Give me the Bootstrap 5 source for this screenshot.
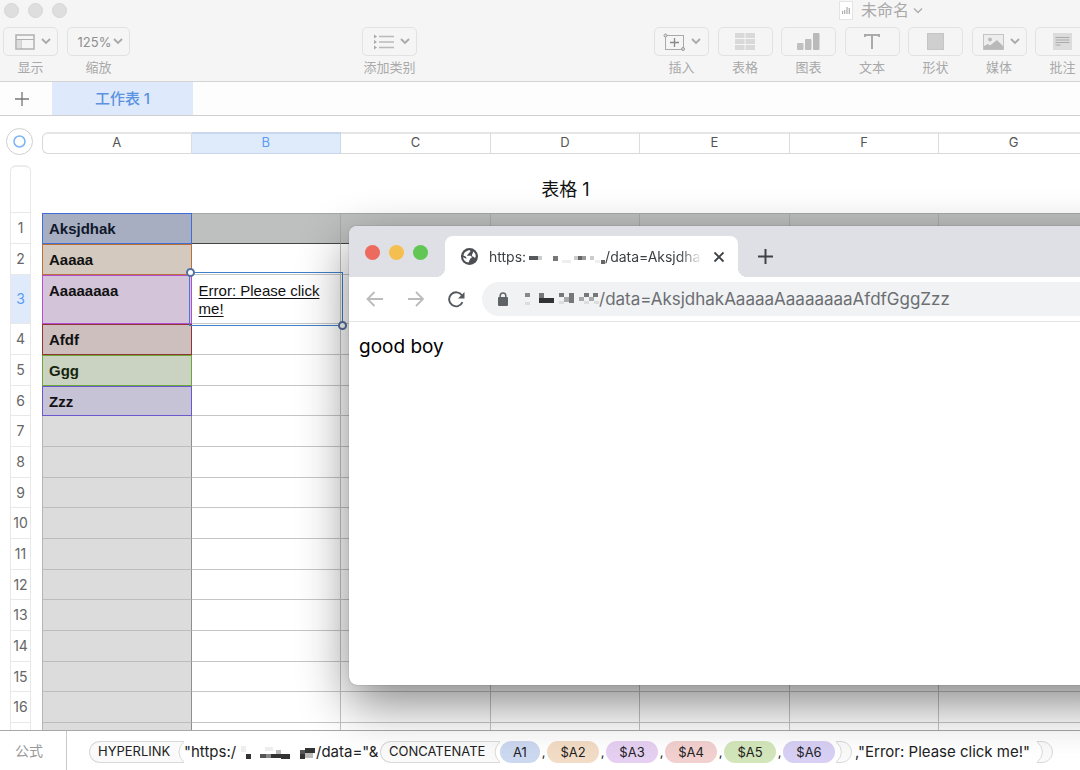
<!DOCTYPE html>
<html lang="zh-CN">
<head>
<meta charset="utf-8">
<meta name="viewport" content="width=device-width, initial-scale=1">
<title>未命名</title>
<link rel="stylesheet" href="https://cdn.jsdelivr.net/npm/bootstrap@5.3.0/dist/css/bootstrap.min.css">
<style>
  body { font-family: Inter, "Noto Sans CJK SC", sans-serif; font-size: 13px; line-height: 18px; color: #222; background: #fff; }
  button { font: inherit; color: inherit; padding: 0; border: 0; background: none; }
  svg { display: block; flex: none; }
  .app { height: 100vh; }
  /* title bar and toolbar */
  .topbar { background: #f5f5f5; border-bottom: 1px solid #d4d4d4; color: #a9a9a9; height: 82px; }
  .titlebar { height: 20px; padding: 0 157px 0 4px; }
  .dots { gap: 9px; }
  .dot { width: 15px; height: 15px; border-radius: 50%; background: #dedede; border: 1px solid #d6d6d6; }
  .doc-title { font-size: 16px; line-height: 20px; }
  .doc-icon { width: 14px; height: 19px; background: #fff; border: 1px solid #e4e4e4; }
  .tools { padding: 7px 0 0 3px; }
  .tool { width: 55px; flex: none; }
  .tool button { height: 29px; border: 1px solid #e2e2e2; border-radius: 5px; gap: 6px; width: 100%; margin-bottom: 2px; }
  .tool button.has-menu { padding-left: 4px; }
  .tool-wide { width: 63px; margin-left: 9px; }
  .tool-wide button { gap: 2px; color: #8f8f8f; }
  .tool-label { font-size: 13px; line-height: 18px; white-space: nowrap; }
  .tool-mid { margin-left: 232px; }
  .tools-end { width: 436px; margin-right: -10px; }
  /* sheet tabs */
  .sheets { height: 34px; background: #fdfdfd; border-bottom: 1px solid #d0d0d0; }
  .add-sheet { width: 52px; color: #777; }
  .sheet-tab { width: 141px; background: #deeafb; color: #5b92e2; font-size: 15px; font-weight: 500; }
  /* grid */
  .sheet { min-height: 0; padding-top: 16px; }
  .grid { table-layout: fixed; border-collapse: separate; border-spacing: 0; width: 1089px; }
  .grid th, .grid td { padding: 0; }
  .col-gutter { width: 42px; }
  .grid .letters th { height: 22px; text-align: center; font-weight: 400; line-height: 17px; padding-bottom: 2px; color: #555; border-top: 2px solid #e6e6e6; border-bottom: 1px solid #d9d9d9; border-right: 1px solid #dcdcdc; }
  .grid .letters th.corner { border: 0; position: relative; }
  .grid .letters th.first { border-left: 1px solid #d9d9d9; border-radius: 6px 0 0 6px; }
  .grid .letters th.on { background: #dfeafb; color: #5b9cf5; border-color: #c9d7ec; }
  .corner button { position: absolute; left: 6px; top: -4px; width: 27px; height: 27px; border: 1px solid #cfcfcf; border-radius: 50%; background: #fff; }
  .title-row > * { height: 59px; }
  .grid .title-row td { text-align: center; font-size: 18px; color: #111; padding-top: 12px; }
  .title-row .num { height: 48px; margin-top: 11px; border-top: 2px solid #ececec; border-radius: 6px 6px 0 0; }
  .num { width: 21px; height: 100%; margin-left: 10px; border: solid #e8e8e8; border-width: 0 1px 1px; }
  .grid th.rowhead { font-weight: 400; color: #666; text-align: center; font-size: 14px; }
  .on .num { background: #dfeafb; color: #5b9cf5; }
  .data > * { height: 31px; }
  .data:nth-child(3n+2) > * { height: 30px; }
  .data.tall > * { height: 49px; }
  .data td { border-bottom: 1px solid #c6c6c6; border-right: 1px solid #c3c3c3; }
  .data td.label { background: #dcdcdc; border-left: 1px solid #b5b5b5; border-right-color: #8e8e8e; border-bottom-color: #bcbcbc; font: bold 15px/18px "Liberation Sans", sans-serif; vertical-align: top; padding: 6px 6px 0; color: #111; }
  .data.head td { background: #bdc0bf; border-bottom-color: #444; border-right-color: #a9acab; border-top: 1px solid #a5a8a7; }
  .data td.ref { border: 1px solid; }
  .data.head td.r1 { background: #a7aec1; border-color: #3f6fd6; color: #10182c; }
  .data td.r2 { background: #d4c9bf; border-color: #bd6f38; }
  .data td.r3 { background: #d3c4d9; border-color: #b24fd2; }
  .data td.r4 { background: #cdbfbe; border-color: #913433; }
  .data td.r5 { background: #cad3c1; border-color: #6da838; color: #16240c; }
  .data td.r6 { background: #c7c3d6; border-color: #6a58cc; }
  .data td.picked { position: relative; vertical-align: top; padding: 7px 6px 0 7px; font: 15px/18px "Liberation Sans", sans-serif; }
  .picked a { color: #111; text-decoration: underline; text-underline-offset: 2px; }
  .picker { position: absolute; inset: -3px; border: 1px solid #3f7fcb; pointer-events: none; }
  .knob { position: absolute; width: 9px; height: 9px; border: 2px solid #56719f; border-radius: 50%; background: #fff; }
  .knob-a { left: -4px; top: -5px; }
  .knob-b { right: -5px; bottom: -5px; }
  /* formula bar */
  .formula { height: 40px; border-top: 1px solid #a8a8a8; background: #fff; white-space: pre; color: #222; }
  .formula-name { width: 67px; border-right: 1px solid #c9c9c9; color: #999; font-size: 14px; padding-left: 15px; }
  .formula-text { padding: 2px 0 0 22px; }
  .fn { height: 22px; border: 1px solid #d9d9d9; border-right: 0; border-radius: 11px 0 0 11px; background: #fafafa; padding-left: 8px; }
  .fn-link { width: 86px; }
  .fn-join { width: 111px; }
  .str { font-size: 15px; }
  .str-scheme { width: 54px; }
  .str-path { width: 64px; }
  .pill { width: 52px; height: 22px; border-radius: 11px; text-align: center; line-height: 22px; }
  .pill-first { width: 40px; }
  .comma { width: 7px; text-align: center; }
  .p1 { background: #ccd8f0; } .p2 { background: #f2dcc5; } .p3 { background: #e6d0f2; }
  .p4 { background: #f1d0cf; } .p5 { background: #d3e6bb; } .p6 { background: #d8cff4; }
  .tail { width: 184px; padding-left: 3px; }
  /* browser window floating over the sheet */
  .browser { position: absolute; left: 349px; right: -60px; top: 226px; bottom: 85px; border-radius: 8px; background: #fff; box-shadow: 0 0 1px rgba(0,0,0,.6), 0 18px 50px rgba(0,0,0,.48); color: #3c4043; }
  .tabstrip { height: 51px; background: #dfe0e6; border-radius: 8px 8px 0 0; padding: 10px 0 0 16px; }
  .light { width: 15px; height: 15px; border-radius: 50%; margin-right: 9px; margin-top: 9px; }
  .light-close { background: #ed6a5f; } .light-min { background: #f5bf50; } .light-max { background: #62c655; }
  .tab { width: 293px; height: 41px; background: #fff; border-radius: 8px 8px 0 0; margin-left: 8px; padding: 0 13px 0 16px; position: relative; font-size: 14px; }
  .tab::before, .tab::after { content: ""; position: absolute; bottom: 0; width: 9px; height: 9px; }
  .tab::before { left: -9px; background: radial-gradient(circle at 0 0, #dfe0e6 9px, #fff 9px); }
  .tab::after { right: -9px; background: radial-gradient(circle at 100% 0, #dfe0e6 9px, #fff 9px); }
  .tab-text { margin-left: 11px; -webkit-mask-image: linear-gradient(90deg, #000 90%, rgba(0,0,0,.1)); mask-image: linear-gradient(90deg, #000 90%, rgba(0,0,0,.1)); white-space: nowrap; }
  .navrow { height: 45px; border-bottom: 1px solid #e4e4e6; padding-left: 17px; }
  .omnibox { height: 34px; border-radius: 17px; background: #f1f2f4; padding-left: 15px; margin-left: 17px; color: #5f6368; }
  .omnibox input { border: 0; background: none; outline: 0; padding: 0; font-size: 17px; line-height: 24px; color: #6b6e72; min-width: 0; }
  .page-text { font-size: 19px; line-height: 24px; color: #000; padding: 13px 10px; }
</style>
</head>
<body>
<div class="app d-flex flex-column position-relative overflow-hidden">

  <header class="topbar flex-shrink-0">
    <div class="titlebar d-flex align-items-center">
      <div class="dots d-flex"><span class="dot"></span><span class="dot"></span><span class="dot"></span></div>
      <div class="d-flex align-items-center ms-auto doc-title">
        <span class="doc-icon d-flex align-items-center justify-content-center me-2"><svg width="8" height="8"><path d="M.5 5v3M2.700 4v4M5 1v7M7.300 2v6" stroke="#aaa" stroke-width="1.200"/></svg></span>
        <span>未命名</span>
        <svg class="ms-1" width="10" height="7"><path d="M1 1.500l4 4 4-4" fill="none" stroke="#b0b0b0" stroke-width="1.500"/></svg>
      </div>
    </div>
    <div class="tools d-flex">
      <div class="tool text-center"><button class="has-menu d-flex align-items-center justify-content-center" aria-label="显示">
        <svg width="20" height="16"><rect x="1" y="1" width="18" height="14" fill="none" stroke="#b0b0b0" stroke-width="1.500"/><path d="M1 5.500h18M6 5.500V15" stroke="#b0b0b0"/><path d="M2 6h4v8H2z" fill="#dcdcdc"/></svg>
        <svg width="10" height="7"><path d="M1 1l4 4 4-4" fill="none" stroke="#a9a9a9" stroke-width="1.800"/></svg></button><div class="tool-label">显示</div></div>
      <div class="tool tool-wide text-center"><button class="has-menu d-flex align-items-center justify-content-center" aria-label="缩放">
        <span>125%</span><svg width="10" height="7"><path d="M1 1l4 4 4-4" fill="none" stroke="#a9a9a9" stroke-width="1.800"/></svg></button><div class="tool-label">缩放</div></div>
      <div class="tool tool-mid text-center"><button class="has-menu d-flex align-items-center justify-content-center" aria-label="添加类别">
        <svg width="21" height="16"><path d="M6 2.500h15M6 8h15M6 13.500h15" stroke="#b9b9b9" stroke-width="1.500"/><path d="M1 .5l3 2-3 2zM1 6l3 2-3 2zM1 11.500l3 2-3 2z" fill="#a9a9a9"/></svg>
        <svg width="10" height="7"><path d="M1 1l4 4 4-4" fill="none" stroke="#a9a9a9" stroke-width="1.800"/></svg></button><div class="tool-label">添加类别</div></div>
      <div class="tools-end d-flex justify-content-between ms-auto">
        <div class="tool text-center"><button class="d-flex align-items-center justify-content-center" aria-label="插入">
          <svg width="22" height="18"><rect x="2.500" y="2.500" width="18" height="14" fill="none" stroke="#a9a9a9"/><path d="M11.500 5v9M7 9.500h9" stroke="#888" stroke-width="1.300"/><circle cx="2.500" cy="2.500" r="1.500" fill="#ddd" stroke="#999"/><circle cx="20" cy="16" r="1.500" fill="#ddd" stroke="#999"/></svg>
          <svg width="10" height="7"><path d="M1 1l4 4 4-4" fill="none" stroke="#a9a9a9" stroke-width="1.800"/></svg></button><div class="tool-label">插入</div></div>
        <div class="tool text-center"><button class="d-flex align-items-center justify-content-center" aria-label="表格">
          <svg width="20" height="17"><path d="M0 0h9.500v5H0zM10.500 0H20v5h-9.500zM0 6h9.500v5H0zM10.500 6H20v5h-9.500zM0 12h9.500v5H0zM10.500 12H20v5h-9.500z" fill="#d9d9d9"/></svg></button><div class="tool-label">表格</div></div>
        <div class="tool text-center"><button class="d-flex align-items-center justify-content-center" aria-label="图表">
          <svg width="23" height="17"><rect y="10" width="6.500" height="7" rx="1" fill="#c0c0c0"/><rect x="8" y="6" width="6.500" height="11" rx="1" fill="#bdbdbd"/><rect x="16" width="6.500" height="17" rx="1" fill="#bababa"/></svg></button><div class="tool-label">图表</div></div>
        <div class="tool text-center"><button class="d-flex align-items-center justify-content-center" aria-label="文本">
          <svg width="16" height="17"><path d="M1 4V2h14v2M8 2v14" fill="none" stroke="#aaa" stroke-width="2"/></svg></button><div class="tool-label">文本</div></div>
        <div class="tool text-center"><button class="d-flex align-items-center justify-content-center" aria-label="形状">
          <svg width="17" height="17"><rect x=".5" y=".5" width="16" height="16" fill="#cfcfcf" stroke="#c5c5c5"/></svg></button><div class="tool-label">形状</div></div>
        <div class="tool text-center"><button class="has-menu d-flex align-items-center justify-content-center" aria-label="媒体">
          <svg width="21" height="16"><rect x=".5" y=".5" width="20" height="15" fill="#ededed" stroke="#c4c4c4"/><circle cx="7" cy="5.500" r="2" fill="#bbb"/><path d="M1 12l4-2 2 1.500L14 6l6 6v3.500H1z" fill="#b9b9b9"/></svg>
          <svg width="10" height="7"><path d="M1 1l4 4 4-4" fill="none" stroke="#a9a9a9" stroke-width="1.800"/></svg></button><div class="tool-label">媒体</div></div>
        <div class="tool text-center"><button class="d-flex align-items-center justify-content-center" aria-label="批注">
          <svg width="19" height="17"><rect width="19" height="17" fill="#dcdcdc"/><path d="M2.500 4.500h14M2.500 7h14M2.500 9.500h14M2.500 12h5" stroke="#aaa"/></svg></button><div class="tool-label">批注</div></div>
      </div>
    </div>
  </header>

  <nav class="sheets d-flex flex-shrink-0">
    <button class="add-sheet d-flex align-items-center justify-content-center pe-2" aria-label="添加工作表"><svg width="14" height="14"><path d="M7 0v14M0 7h14" stroke="#777" stroke-width="1.300"/></svg></button>
    <button class="sheet-tab">工作表 1</button>
  </nav>

  <main class="sheet flex-grow-1 overflow-hidden">
    <table class="grid">
      <colgroup><col class="col-gutter"><col span="7"></colgroup>
      <tbody>
        <tr class="letters"><th class="corner"><button aria-label="全选" class="d-flex align-items-center justify-content-center"><svg width="13" height="13"><circle cx="6.500" cy="6.500" r="5.500" fill="none" stroke="#7ab4f7" stroke-width="1.500"/></svg></button></th>
          <th class="first" scope="col">A</th><th class="on" scope="col">B</th><th scope="col">C</th><th scope="col">D</th><th scope="col">E</th><th scope="col">F</th><th scope="col">G</th></tr>
        <tr class="title-row"><th><div class="num"></div></th><td colspan="7">表格 1</td></tr>
        <tr class="data head"><th class="rowhead" scope="row"><div class="num d-flex align-items-center justify-content-center">1</div></th><td class="label ref r1">Aksjdhak</td><td></td><td></td><td></td><td></td><td></td><td></td></tr>
        <tr class="data"><th class="rowhead" scope="row"><div class="num d-flex align-items-center justify-content-center">2</div></th><td class="label ref r2">Aaaaa</td><td></td><td></td><td></td><td></td><td></td><td></td></tr>
        <tr class="data tall"><th class="rowhead on" scope="row"><div class="num d-flex align-items-center justify-content-center">3</div></th><td class="label ref r3">Aaaaaaaa</td><td class="picked"><a href="#">Error: Please click me!</a><div class="picker"><span class="knob knob-a"></span><span class="knob knob-b"></span></div></td><td></td><td></td><td></td><td></td><td></td></tr>
        <tr class="data"><th class="rowhead" scope="row"><div class="num d-flex align-items-center justify-content-center">4</div></th><td class="label ref r4">Afdf</td><td></td><td></td><td></td><td></td><td></td><td></td></tr>
        <tr class="data"><th class="rowhead" scope="row"><div class="num d-flex align-items-center justify-content-center">5</div></th><td class="label ref r5">Ggg</td><td></td><td></td><td></td><td></td><td></td><td></td></tr>
        <tr class="data"><th class="rowhead" scope="row"><div class="num d-flex align-items-center justify-content-center">6</div></th><td class="label ref r6">Zzz</td><td></td><td></td><td></td><td></td><td></td><td></td></tr>
        <tr class="data"><th class="rowhead" scope="row"><div class="num d-flex align-items-center justify-content-center">7</div></th><td class="label"></td><td></td><td></td><td></td><td></td><td></td><td></td></tr>
        <tr class="data"><th class="rowhead" scope="row"><div class="num d-flex align-items-center justify-content-center">8</div></th><td class="label"></td><td></td><td></td><td></td><td></td><td></td><td></td></tr>
        <tr class="data"><th class="rowhead" scope="row"><div class="num d-flex align-items-center justify-content-center">9</div></th><td class="label"></td><td></td><td></td><td></td><td></td><td></td><td></td></tr>
        <tr class="data"><th class="rowhead" scope="row"><div class="num d-flex align-items-center justify-content-center">10</div></th><td class="label"></td><td></td><td></td><td></td><td></td><td></td><td></td></tr>
        <tr class="data"><th class="rowhead" scope="row"><div class="num d-flex align-items-center justify-content-center">11</div></th><td class="label"></td><td></td><td></td><td></td><td></td><td></td><td></td></tr>
        <tr class="data"><th class="rowhead" scope="row"><div class="num d-flex align-items-center justify-content-center">12</div></th><td class="label"></td><td></td><td></td><td></td><td></td><td></td><td></td></tr>
        <tr class="data"><th class="rowhead" scope="row"><div class="num d-flex align-items-center justify-content-center">13</div></th><td class="label"></td><td></td><td></td><td></td><td></td><td></td><td></td></tr>
        <tr class="data"><th class="rowhead" scope="row"><div class="num d-flex align-items-center justify-content-center">14</div></th><td class="label"></td><td></td><td></td><td></td><td></td><td></td><td></td></tr>
        <tr class="data"><th class="rowhead" scope="row"><div class="num d-flex align-items-center justify-content-center">15</div></th><td class="label"></td><td></td><td></td><td></td><td></td><td></td><td></td></tr>
        <tr class="data"><th class="rowhead" scope="row"><div class="num d-flex align-items-center justify-content-center">16</div></th><td class="label"></td><td></td><td></td><td></td><td></td><td></td><td></td></tr>
        <tr class="data"><th class="rowhead" scope="row"><div class="num"></div></th><td class="label"></td><td></td><td></td><td></td><td></td><td></td><td></td></tr>
      </tbody>
    </table>
  </main>

  <footer class="formula d-flex flex-shrink-0">
    <div class="formula-name d-flex align-items-center">公式</div>
    <div class="formula-text d-flex align-items-center">
      <span class="fn fn-link">HYPERLINK</span><svg width="9" height="22"><path d="M0 .5h9Q-1 11 9 21.500H0" fill="#fafafa" stroke="#d9d9d9"/></svg>
      <span class="str str-scheme">"https:/</span>
      <svg width="78" height="16" aria-hidden="true" shape-rendering="crispEdges"><path d="M3 2h5v6H3zM27 3h8v4h-8z" fill="#eee"/><path d="M8 10h5v5H8zM43 10h5v5h-5zM47 10h5v5h-5z" fill="#333"/><path d="M22 10h6v4h-6zM62 6h6v4h-6z" fill="#555"/><path d="M28 10h5v4h-5z" fill="#888"/><path d="M33 10h5v4h-5zM38 10h5v4h-5zM67 4h10v5H67zM62 10h5v5h-5z" fill="#333"/><path d="M38 6h5v4h-5zM67 9h8v5h-8z" fill="#bbb"/></svg>
      <span class="str str-path">/data="&amp;</span>
      <span class="fn fn-join">CONCATENATE</span><svg width="9" height="22"><path d="M0 .5h9Q-1 11 9 21.500H0" fill="#fafafa" stroke="#d9d9d9"/></svg>
      <span class="pill pill-first p1">A1</span><span class="comma">,</span><span class="pill p2">$A2</span><span class="comma">,</span><span class="pill p3">$A3</span><span class="comma">,</span><span class="pill p4">$A4</span><span class="comma">,</span><span class="pill p5">$A5</span><span class="comma">,</span><span class="pill p6">$A6</span>
      <svg width="17" height="22"><path d="M1 .5h5a10.500 10.500 0 0 1 0 21H1Q12 11 1 .5z" fill="#fafafa" stroke="#d9d9d9"/></svg>
      <span class="tail str">,"Error: Please click me!"</span>
      <svg width="17" height="22"><path d="M1 .5h5a10.500 10.500 0 0 1 0 21H1Q12 11 1 .5z" fill="#fafafa" stroke="#d9d9d9"/></svg>
    </div>
  </footer>

  <section class="browser" aria-label="浏览器">
    <div class="tabstrip d-flex">
      <span class="light light-close"></span><span class="light light-min"></span><span class="light light-max"></span>
      <div class="tab d-flex align-items-center">
        <svg width="17" height="17" viewBox="0 0 17 17"><circle cx="8.500" cy="8.500" r="8.500" fill="#4b4f54"/><path d="M9 2.200c.8 1.300.2 2.300-1.200 2.700-.3 1.600-1.800 1.300-1.800 2.900h3.800c1 .5 1.300 1.800.5 2.300-1.800.5-1.500 2.600-2.700 4.500C4.300 14.300 2.300 12 2.100 9.300l3.200 1.400c.6-1.500-1-2.900-2.900-3.300C2.900 4.600 5.500 2.200 9 2.200z" fill="#fff"/><path d="M11.800 3.200c1.900 1.100 3.100 3.100 2.900 5.300-.1.800-.6 1.400-1.200 1.300-.4-1.300-2.500-.8-2.600-2.500 0-1.500 1.700-2 .9-4.100z" fill="#fff"/></svg>
        <span class="tab-text d-flex align-items-center">https:<svg width="79" height="14" aria-hidden="true" shape-rendering="crispEdges"><path d="M3 6h9v4H3z" fill="#54585c"/><path d="M12 6h4v4h-4zM64 6h4v4h-4zM48 6h4v4h-4z" fill="#ccc"/><path d="M27 6h5v5h-5z" fill="#777"/><path d="M52 6h4v4h-4zM75 10h4v4h-4z" fill="#666"/><path d="M56 6h4v4h-4z" fill="#999"/><path d="M36 10h9v3h-9zM69 10h5v3h-5z" fill="#eee"/></svg>/data=Aksjdha</span>
        <button class="ms-auto" aria-label="关闭标签页"><svg width="12" height="12"><path d="M1.500 1.500l9 9M10.500 1.500l-9 9" stroke="#3f4347" stroke-width="1.800"/></svg></button>
      </div>
      <button class="ms-3 ps-1" aria-label="新标签页"><svg width="15" height="15"><path d="M7.500 0v15M0 7.500h15" stroke="#3f4347" stroke-width="2"/></svg></button>
    </div>
    <div class="navrow d-flex align-items-center">
      <button aria-label="后退"><svg width="18" height="16"><path d="M17 8H2M8.500 1L1.500 8l7 7" fill="none" stroke="#bbb" stroke-width="1.800"/></svg></button>
      <button class="ms-4" aria-label="前进"><svg width="16" height="16"><path d="M0 8h15M8 1l7 7-7 7" fill="none" stroke="#bbb" stroke-width="1.800"/></svg></button>
      <button class="ms-4" aria-label="重新加载"><svg width="17" height="17"><path d="M14.500 11.200A7 7 0 1 1 14 4.500" fill="none" stroke="#55595e" stroke-width="1.900"/><path d="M16.500 1v6.500H10z" fill="#55595e"/></svg></button>
      <div class="omnibox d-flex align-items-center flex-grow-1">
        <svg width="12" height="15"><rect x="1" y="5" width="10" height="9" rx="1" fill="#5f6368"/><path d="M3.200 5V3.800a2.800 2.800 0 0 1 5.600 0V5" fill="none" stroke="#5f6368" stroke-width="1.500"/></svg>
        <svg class="ms-3" width="74" height="16" aria-hidden="true" shape-rendering="crispEdges"><path d="M0 2h5v4H0z" fill="#888"/><path d="M14 2h5v5h-5zM34 2h5v4h-5zM44 2h5v10h-5zM59 2h5v4h-5zM68 2h5v4h-5z" fill="#777"/><path d="M14 7h10v5H14zM24 7h5v5h-5z" fill="#333"/><path d="M39 6h5v5h-5zM64 6h5v4h-5zM54 6h5v4h-5z" fill="#aaa"/><path d="M34 10h5v3h-5zM59 10h5v3h-5zM69 10h5v3h-5zM0 11h5v3H0z" fill="#ddd"/></svg>
        <input class="flex-grow-1" type="text" aria-label="地址" value="/data=AksjdhakAaaaaAaaaaaaaAfdfGggZzz">
      </div>
    </div>
    <div class="page-text">good boy</div>
  </section>
</div>
<script src="https://cdn.jsdelivr.net/npm/bootstrap@5.3.0/dist/js/bootstrap.bundle.min.js"></script>
</body>
</html>
